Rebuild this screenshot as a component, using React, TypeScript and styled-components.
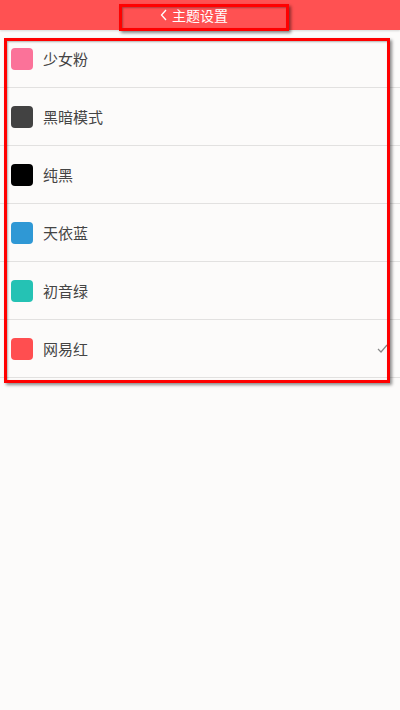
import React from "react";
import styled, { createGlobalStyle } from "styled-components";

const GlobalStyle = createGlobalStyle`
  html, body {
    margin: 0;
    padding: 0;
    background: #fcfbfa;
    font-family: "Noto Sans CJK SC", "Noto Sans", sans-serif;
  }
`;

const Page = styled.div`
  position: relative;
  width: 400px;
  height: 710px;
  background: #fcfbfa;
  overflow: hidden;
`;

const Header = styled.div`
  height: 30px;
  background: #ff5152;
  display: flex;
  align-items: center;
  justify-content: center;
  padding-right: 12px;
  box-shadow: 0 1px 2px rgba(0, 0, 0, 0.15);
  color: #fff;
  font-size: 14px;
`;

const Back = styled.svg`
  width: 8px;
  height: 12px;
  margin-right: 4px;
`;

const List = styled.div`
  display: flex;
  flex-direction: column;
`;

const Row = styled.div`
  height: 57px;
  display: flex;
  align-items: center;
  padding: 0 12px 0 11px;
  border-bottom: 1px solid #e2e1e0;
`;

const Swatch = styled.span<{ $color: string }>`
  width: 22px;
  height: 22px;
  border-radius: 4px;
  background: ${(p) => p.$color};
  margin-right: 10px;
`;

const Label = styled.span`
  flex: 1;
  font-size: 15px;
  color: #444;
`;

const Check = styled.svg`
  width: 11px;
  height: 9px;
`;

// annotation boxes drawn over the screenshot
const Mark = styled.div<{ $l: number; $t: number; $w: number; $h: number }>`
  position: absolute;
  left: ${(p) => p.$l}px;
  top: ${(p) => p.$t}px;
  width: ${(p) => p.$w}px;
  height: ${(p) => p.$h}px;
  box-sizing: border-box;
  border: 3px solid #ff0000;
  box-shadow: 2px 2px 3px rgba(0, 0, 0, 0.45), inset 1px 1px 2px rgba(0, 0, 0, 0.3);
  pointer-events: none;
`;

const themes = [
  { name: "少女粉", color: "#fb7299" },
  { name: "黑暗模式", color: "#424242" },
  { name: "纯黑", color: "#000000" },
  { name: "天依蓝", color: "#2f98d5" },
  { name: "初音绿", color: "#25c2b4" },
  { name: "网易红", color: "#ff4e50", active: true },
];

export default function App() {
  return (
    <Page>
      <GlobalStyle />
      <Header>
        <Back viewBox="0 0 8 12">
          <path d="M6 1 L1.5 6 L6 11" fill="none" stroke="#fff" strokeWidth="1.3" />
        </Back>
        主题设置
      </Header>
      <List>
        {themes.map((t) => (
          <Row key={t.name}>
            <Swatch $color={t.color} />
            <Label>{t.name}</Label>
            {t.active && (
              <Check viewBox="0 0 11 9">
                <path d="M1 5 L4 8 L10 1" fill="none" stroke="#888" strokeWidth="1.2" />
              </Check>
            )}
          </Row>
        ))}
      </List>
      <Mark $l={119} $t={4} $w={170} $h={27} />
      <Mark $l={4} $t={38} $w={386} $h={345} />
    </Page>
  );
}
